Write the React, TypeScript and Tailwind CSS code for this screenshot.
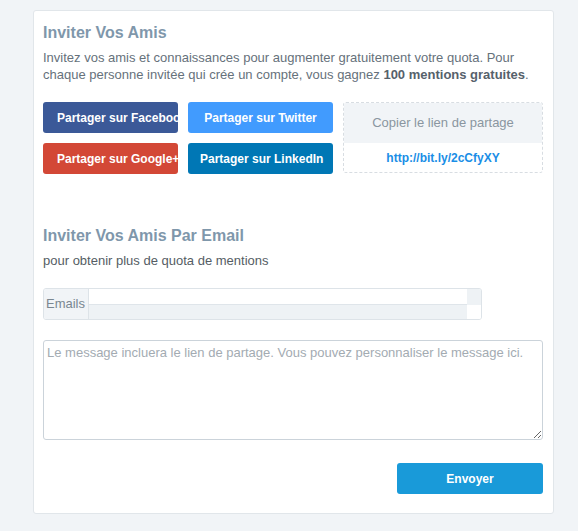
export default function App() {
  return (
    <div className="min-h-[531px] w-[578px] bg-[#f1f4f7] pt-[10px] pl-[33px] pr-[24px] font-['Liberation_Sans',Arial,sans-serif]">
      <div className="h-[504px] rounded-[3px] border border-[#e1e6ea] bg-white px-[9px] pt-[12px]">
        <h2 className="text-[16px] font-bold leading-[20px] text-[#7f97ab]">Inviter Vos Amis</h2>
        <p className="mt-[6px] text-[13px] leading-[17px] text-[#66717b]">
          Invitez vos amis et connaissances pour augmenter gratuitement votre quota. Pour chaque personne invitée qui crée un compte, vous gagnez{" "}
          <b className="text-[#56616b]">100 mentions gratuites</b>.
        </p>

        <div className="mt-[19px] flex gap-[10px]">
          <div className="grid grid-cols-[135px_145px] gap-x-[10px] gap-y-[10px]">
            <button className="h-[31px] overflow-hidden whitespace-nowrap rounded-[3px] bg-[#3b5998] px-[14px] text-center text-[12px] font-bold text-white">
              Partager sur Facebook
            </button>
            <button className="h-[31px] overflow-hidden whitespace-nowrap rounded-[3px] bg-[#419bfe] px-[14px] text-center text-[12px] font-bold text-white">
              Partager sur Twitter
            </button>
            <button className="h-[31px] overflow-hidden whitespace-nowrap rounded-[3px] bg-[#d34836] px-[14px] text-center text-[12px] font-bold text-white">
              Partager sur Google+
            </button>
            <button className="h-[31px] overflow-hidden whitespace-nowrap rounded-[3px] bg-[#0077b5] px-[12px] text-center text-[12px] font-bold text-white">
              Partager sur LinkedIn
            </button>
          </div>
          <div className="flex h-[71px] w-[200px] flex-col overflow-hidden rounded-[3px] border border-dashed border-[#d8dde2]">
            <div className="flex h-[40px] items-center justify-center bg-[#f1f4f7] text-[13px] text-[#8a96a0]">
              Copier le lien de partage
            </div>
            <div className="flex flex-1 items-center justify-center text-[12px] font-bold text-[#1a8ee6]">
              http://bit.ly/2cCfyXY
            </div>
          </div>
        </div>

        <h2 className="mt-[52px] text-[16px] font-bold leading-[20px] text-[#7f97ab]">Inviter Vos Amis Par Email</h2>
        <p className="mt-[7px] text-[13px] leading-[16px] text-[#555d64]">pour obtenir plus de quota de mentions</p>

        <div className="mt-[19px] flex h-[32px] w-[439px] overflow-hidden rounded-[3px] border border-[#dde3e8]">
          <div className="flex w-[45px] items-center border-r border-[#dde3e8] bg-[#f1f4f7] pl-[2px] text-[13px] text-[#7a8791]">
            Emails
          </div>
          <div className="flex flex-1 flex-col">
            <div className="h-[16px] border-b border-[#dfe5ea] bg-white" />
            <div className="flex-1 bg-[#eef2f5]" />
          </div>
          <div className="flex w-[14px] flex-col">
            <div className="h-[16px] bg-[#eef2f5]" />
            <div className="flex-1 bg-white" />
          </div>
        </div>

        <textarea
          className="mt-[20px] block h-[100px] w-[500px] rounded-[3px] border border-[#cbd3da] px-[3px] py-[3px] text-[13px] leading-[17px] text-[#555] outline-none placeholder:text-[#a3abb2]"
          placeholder="Le message incluera le lien de partage. Vous pouvez personnaliser le message ici."
        />

        <div className="mt-[23px] flex w-[500px] justify-end">
          <button className="h-[31px] w-[146px] rounded-[3px] bg-[#199ad9] text-[12px] font-bold text-white">Envoyer</button>
        </div>
      </div>
    </div>
  );
}
